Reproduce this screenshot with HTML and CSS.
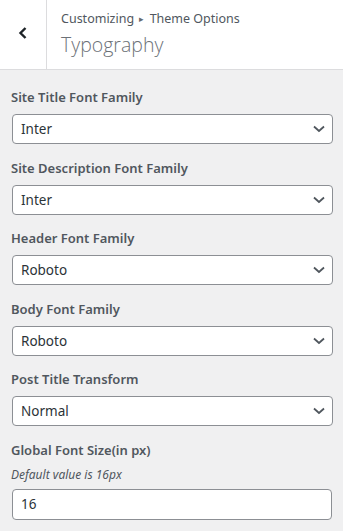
FILE: index.html
```html
<!DOCTYPE html>
<html lang="en">
<head>
  <meta charset="UTF-8">
  <meta name="viewport" content="width=device-width, initial-scale=1.0">
  <title>Typography</title>
  <link rel="stylesheet" href="styles.css">
</head>
<body>
  <div class="panel-header">
    <button class="back" aria-label="Back">
      <svg width="12" height="14" viewBox="0 0 12 14"><path d="M8.5 2 L3.5 7 L8.5 12" fill="none" stroke="#1d2327" stroke-width="2.4"/></svg>
    </button>
    <div class="titles">
      <div class="crumb">Customizing <span class="sep">&#9656;</span> Theme Options</div>
      <div class="title">Typography</div>
    </div>
  </div>

  <div class="controls">
    <div class="control">
      <label>Site Title Font Family</label>
      <div class="select">Inter</div>
    </div>
    <div class="control">
      <label>Site Description Font Family</label>
      <div class="select">Inter</div>
    </div>
    <div class="control">
      <label>Header Font Family</label>
      <div class="select">Roboto</div>
    </div>
    <div class="control">
      <label>Body Font Family</label>
      <div class="select">Roboto</div>
    </div>
    <div class="control">
      <label>Post Title Transform</label>
      <div class="select">Normal</div>
    </div>
    <div class="control">
      <label>Global Font Size(in px)</label>
      <div class="desc">Default value is 16px</div>
      <div class="input">16</div>
    </div>
  </div>
</body>
</html>
```
FILE: styles.css
```css
body {
  margin: 0;
  background-color: #f0f0f1;
  font-family: "Noto Sans", "Open Sans", sans-serif;
  color: #3c434a;
}
.panel-header {
  display: flex;
  height: 69px;
  background-color: #fff;
  border-bottom: 1px solid #dcdcde;
}
.back {
  width: 47px;
  padding: 0 0 4px;
  border: none;
  border-right: 1px solid #dcdcde;
  background: #fff;
  display: flex;
  align-items: center;
  justify-content: center;
}
.titles {
  padding: 10px 0 0 14px;
}
.crumb {
  font-size: 12.5px;
  line-height: 18px;
  color: #50575e;
}
.sep {
  font-size: 9px;
  color: #646970;
  vertical-align: 1px;
  margin: 0 2px;
}
.title {
  margin-top: 4px;
  font-family: "Open Sans", "Noto Sans", sans-serif;
  font-size: 19.5px;
  font-weight: 300;
  line-height: 26px;
  color: #6c7177;
}
.controls {
  padding: 17px 10px 0 12px;
}
.control {
  margin-bottom: 13.5px;
}
label {
  display: block;
  font-size: 13px;
  font-weight: 600;
  line-height: 21px;
  color: #50575e;
  margin-left: -1px;
  margin-bottom: 6px;
}
.select, .input {
  height: 28px;
  border: 1px solid #8c8f94;
  border-radius: 4px;
  background-color: #fff;
  font-size: 13.5px;
  line-height: 28px;
  padding: 0 8px;
  color: #2c3338;
}
.select {
  background-image: url("data:image/svg+xml,%3Csvg xmlns='http://www.w3.org/2000/svg' width='12' height='8' viewBox='0 0 12 8'%3E%3Cpath d='M1 1.5 L6 6 L11 1.5' fill='none' stroke='%2350575e' stroke-width='1.8'/%3E%3C/svg%3E");
  background-repeat: no-repeat;
  background-position: right 7px center;
}
.input {
  height: 29px;
  line-height: 29px;
  margin-right: 1px;
}
.desc {
  font-size: 12px;
  font-style: italic;
  line-height: 16px;
  color: #50575e;
  margin: 2px 0 6px -1px;
}
```
